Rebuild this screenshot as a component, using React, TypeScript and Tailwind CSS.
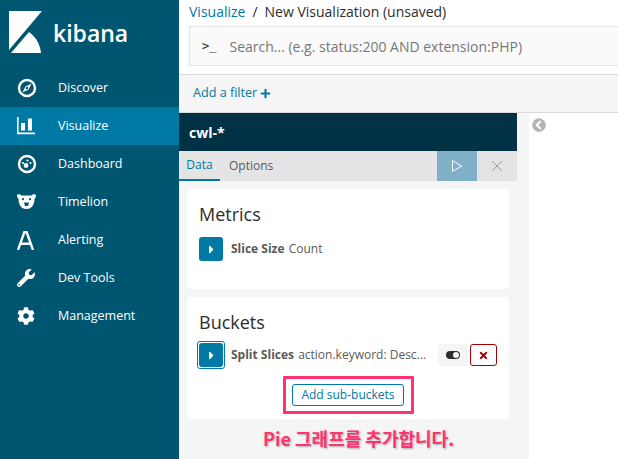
import { FaChevronCircleLeft, FaCog, FaPlus, FaTimes, FaWrench, FaCaretRight } from "react-icons/fa";
import type { ReactNode } from "react";

function KibanaLogo() {
  return (
    <svg width="33" height="42" viewBox="0 0 33 42">
      <path d="M0 0H33L0 39Z" fill="#fff" />
      <path d="M2 42L20 21C27 26 31 33 32 42Z" fill="#fff" />
    </svg>
  );
}

function DiscoverIcon() {
  return (
    <svg width="20" height="20" viewBox="0 0 20 20">
      <circle cx="10" cy="10" r="8" fill="none" stroke="#fff" strokeWidth="2.4" />
      <path d="M14.5 5.5L11.6 11.6L5.5 14.5L8.4 8.4Z" fill="#fff" />
      <circle cx="10" cy="10" r="1.2" fill="#005571" />
    </svg>
  );
}

function VisualizeIcon() {
  return (
    <svg width="18" height="18" viewBox="0 0 18 18">
      <path d="M0 0H1.6V15.6H18V17.2H0Z" fill="#fff" />
      <rect x="4" y="6" width="4" height="7.5" fill="#fff" />
      <rect x="11" y="1.5" width="4" height="12" fill="#fff" />
    </svg>
  );
}

function DashboardIcon() {
  return (
    <svg width="20" height="20" viewBox="0 0 20 20">
      <circle cx="10" cy="10" r="8" fill="none" stroke="#fff" strokeWidth="2.4" />
      <circle cx="9" cy="11.5" r="2.4" fill="#fff" />
      <circle cx="6" cy="9" r="1.1" fill="#fff" />
      <circle cx="10.5" cy="6.5" r="1.1" fill="#fff" />
      <circle cx="13.5" cy="9" r="1.1" fill="#fff" />
    </svg>
  );
}

function BearIcon() {
  return (
    <svg width="19" height="16" viewBox="0 0 19 16">
      <path d="M0 1.5C0 0 3 -0.5 4.5 1.5H14.5C16 -0.5 19 0 19 1.5C19 3.5 18 4 17.5 5C17.5 10 15 15 9.5 15C4 15 1.5 10 1.5 5C1 4 0 3.5 0 1.5Z" fill="#fff" />
      <circle cx="6" cy="5.2" r="1.1" fill="#005571" />
      <circle cx="13" cy="5.2" r="1.1" fill="#005571" />
      <path d="M7 8.5H12L11 12H8Z" fill="#005571" />
    </svg>
  );
}

function AlertingIcon() {
  return (
    <svg width="17" height="19" viewBox="0 0 17 19">
      <path d="M1 19L7.4 1H9.6L16 19M3.4 12.8H13.6" fill="none" stroke="#fff" strokeWidth="2.4" />
    </svg>
  );
}

function NavItem({ icon, label, active }: { icon: ReactNode; label: string; active?: boolean }) {
  return (
    <div className={`flex h-[38px] items-center pl-[17px] ${active ? "bg-[#0079a5]" : ""}`}>
      <div className="flex w-[41px] shrink-0 items-center">{icon}</div>
      <span className="text-[12.5px] font-medium text-white">{label}</span>
    </div>
  );
}

function Caret({ focused }: { focused?: boolean }) {
  return (
    <div className={`shrink-0 rounded-[3px] ${focused ? "border border-[#0079a5] p-[1px]" : ""}`}>
      <div className="flex h-6 w-6 items-center justify-center rounded-[3px] bg-[#0079a5]">
        <FaCaretRight className="text-[13px] text-white" />
      </div>
    </div>
  );
}

export default function App() {
  return (
    <div className="flex h-[459px] w-[618px] overflow-hidden bg-white font-['Open_Sans',sans-serif]">
      <aside className="flex w-[179px] shrink-0 flex-col bg-[#005571]">
        <div className="flex h-[69px] items-start pl-[9px] pt-[11px]">
          <KibanaLogo />
          <span className="ml-[11px] mt-[7px] text-[23px] leading-[30px] font-semibold text-white">kibana</span>
        </div>
        <NavItem icon={<DiscoverIcon />} label="Discover" />
        <NavItem icon={<VisualizeIcon />} label="Visualize" active />
        <NavItem icon={<DashboardIcon />} label="Dashboard" />
        <NavItem icon={<BearIcon />} label="Timelion" />
        <NavItem icon={<AlertingIcon />} label="Alerting" />
        <NavItem icon={<FaWrench className="text-[18px] text-white" />} label="Dev Tools" />
        <NavItem icon={<FaCog className="text-[18px] text-white" />} label="Management" />
      </aside>

      <main className="relative flex min-w-0 flex-1 flex-col">
        <div className="h-[75px] shrink-0 border-b border-[#d9d9d9] pl-[10px]">
          <div className="flex h-[23px] items-center text-[14px] text-[#2d2d2d]">
            <span className="text-[#0079a5]">Visualize</span>
            <span className="mx-[7px]">/</span>
            <span>New Visualization (unsaved)</span>
          </div>
          <div className="mt-[3px] flex h-[40px] items-center border border-r-0 border-[#e4e4e4] bg-[#fafafa] pl-[12px] text-[14px] text-[#777]">
            <span className="mr-[13px] font-['DejaVu_Sans_Mono',monospace] text-[12px] text-[#2d2d2d]">&gt;_</span>
            <span>Search... (e.g. status:200 AND extension:PHP)</span>
          </div>
        </div>

        <div className="flex h-[38px] shrink-0 items-center gap-[3px] border-b border-[#d9d9d9] bg-[#f5f5f5] pl-[14px] text-[12.6px] text-[#0079a5]">
          <span>Add a filter</span>
          <FaPlus className="text-[11px]" />
        </div>

        <div className="flex min-h-0 flex-1">
          <section className="flex w-[350px] shrink-0 flex-col bg-[#f5f5f5]">
            <div className="mr-[12px] flex h-[38px] shrink-0 items-center bg-[#003145] pl-[10px] text-[14px] font-bold text-white">cwl-*</div>
            <div className="mr-[12px] flex h-[30px] shrink-0 items-stretch bg-[#e4e4e4] text-[12px]">
              <div className="flex w-[41px] items-center justify-center border-b-2 border-[#0079a5] text-[#0079a5]">Data</div>
              <div className="flex items-center pl-[9px] text-[#5a5a5a]">Options</div>
              <div className="ml-auto flex w-[40px] items-center justify-center bg-[#80afc8]">
                <svg width="12" height="14" viewBox="0 0 12 14">
                  <path d="M1.5 1.5L10.5 7L1.5 12.5Z" fill="none" stroke="#fff" strokeWidth="1" />
                </svg>
              </div>
              <div className="flex w-[40px] items-center justify-center">
                <svg width="12" height="12" viewBox="0 0 12 12">
                  <path d="M1 1L11 11M11 1L1 11" stroke="#9a9a9a" strokeWidth="1" />
                </svg>
              </div>
            </div>

            <div className="ml-[8px] mr-[20px] mt-[8px] h-[100px] shrink-0 rounded-[4px] bg-white px-[12px] pt-[13px]">
              <h2 className="text-[18px] leading-[25px] text-[#2d2d2d]">Metrics</h2>
              <div className="mt-[10px] flex items-center gap-[8px] text-[12px] text-[#5a5a5a]">
                <Caret />
                <span><b className="font-bold">Slice Size</b> <span className="ml-[1px]">Count</span></span>
              </div>
            </div>

            <div className="ml-[8px] mr-[20px] mt-[8px] h-[122px] shrink-0 rounded-[4px] bg-white pl-[10px] pr-[12px] pt-[13px]">
              <h2 className="pl-[2px] text-[18px] leading-[25px] text-[#2d2d2d]">Buckets</h2>
              <div className="mt-[6px] flex items-center text-[12px] text-[#5a5a5a]">
                <Caret focused />
                <span className="ml-[6px] whitespace-nowrap"><b className="font-bold">Split Slices</b> <span className="ml-[1px]">action.keyword: Desc...</span></span>
                <div className="ml-auto flex items-center">
                  <div className="flex h-[22px] w-[30px] items-center justify-center rounded-l-[3px] bg-[#f5f5f5]">
                    <svg width="14" height="8" viewBox="0 0 14 8">
                      <rect x="0" y="0" width="14" height="8" rx="4" fill="#2d2d2d" />
                      <circle cx="10" cy="4" r="3" fill="#f5f5f5" />
                    </svg>
                  </div>
                  <div className="ml-[2px] flex h-[22px] w-[27px] items-center justify-center rounded-[3px] border border-[#a30000] bg-white">
                    <FaTimes className="text-[11px] text-[#a30000]" />
                  </div>
                </div>
              </div>
              <div className="ml-[2px] mt-[7px] flex justify-center">
                <div className="flex h-[38px] w-[131px] items-center justify-center rounded-[1px] border-[3px] border-[#ff3370]">
                  <div className="flex h-[22px] w-[112px] items-center justify-center rounded-[3px] border border-[#0079a5] text-[12px] text-[#0079a5]">Add sub-buckets</div>
                </div>
              </div>
            </div>
          </section>
          <div className="pl-[3px] pt-[5px]">
            <FaChevronCircleLeft className="text-[14px] text-[#b4b4b4]" />
          </div>
        </div>

        <div className="absolute left-[84px] top-[426px] font-['Noto_Sans_CJK_KR',sans-serif] text-[18px] leading-[24px] font-bold whitespace-nowrap text-[#ff3370] [text-shadow:1px_1px_2px_rgba(0,0,0,0.3)]">
          Pie 그래프를 추가합니다.
        </div>
      </main>
    </div>
  );
}
